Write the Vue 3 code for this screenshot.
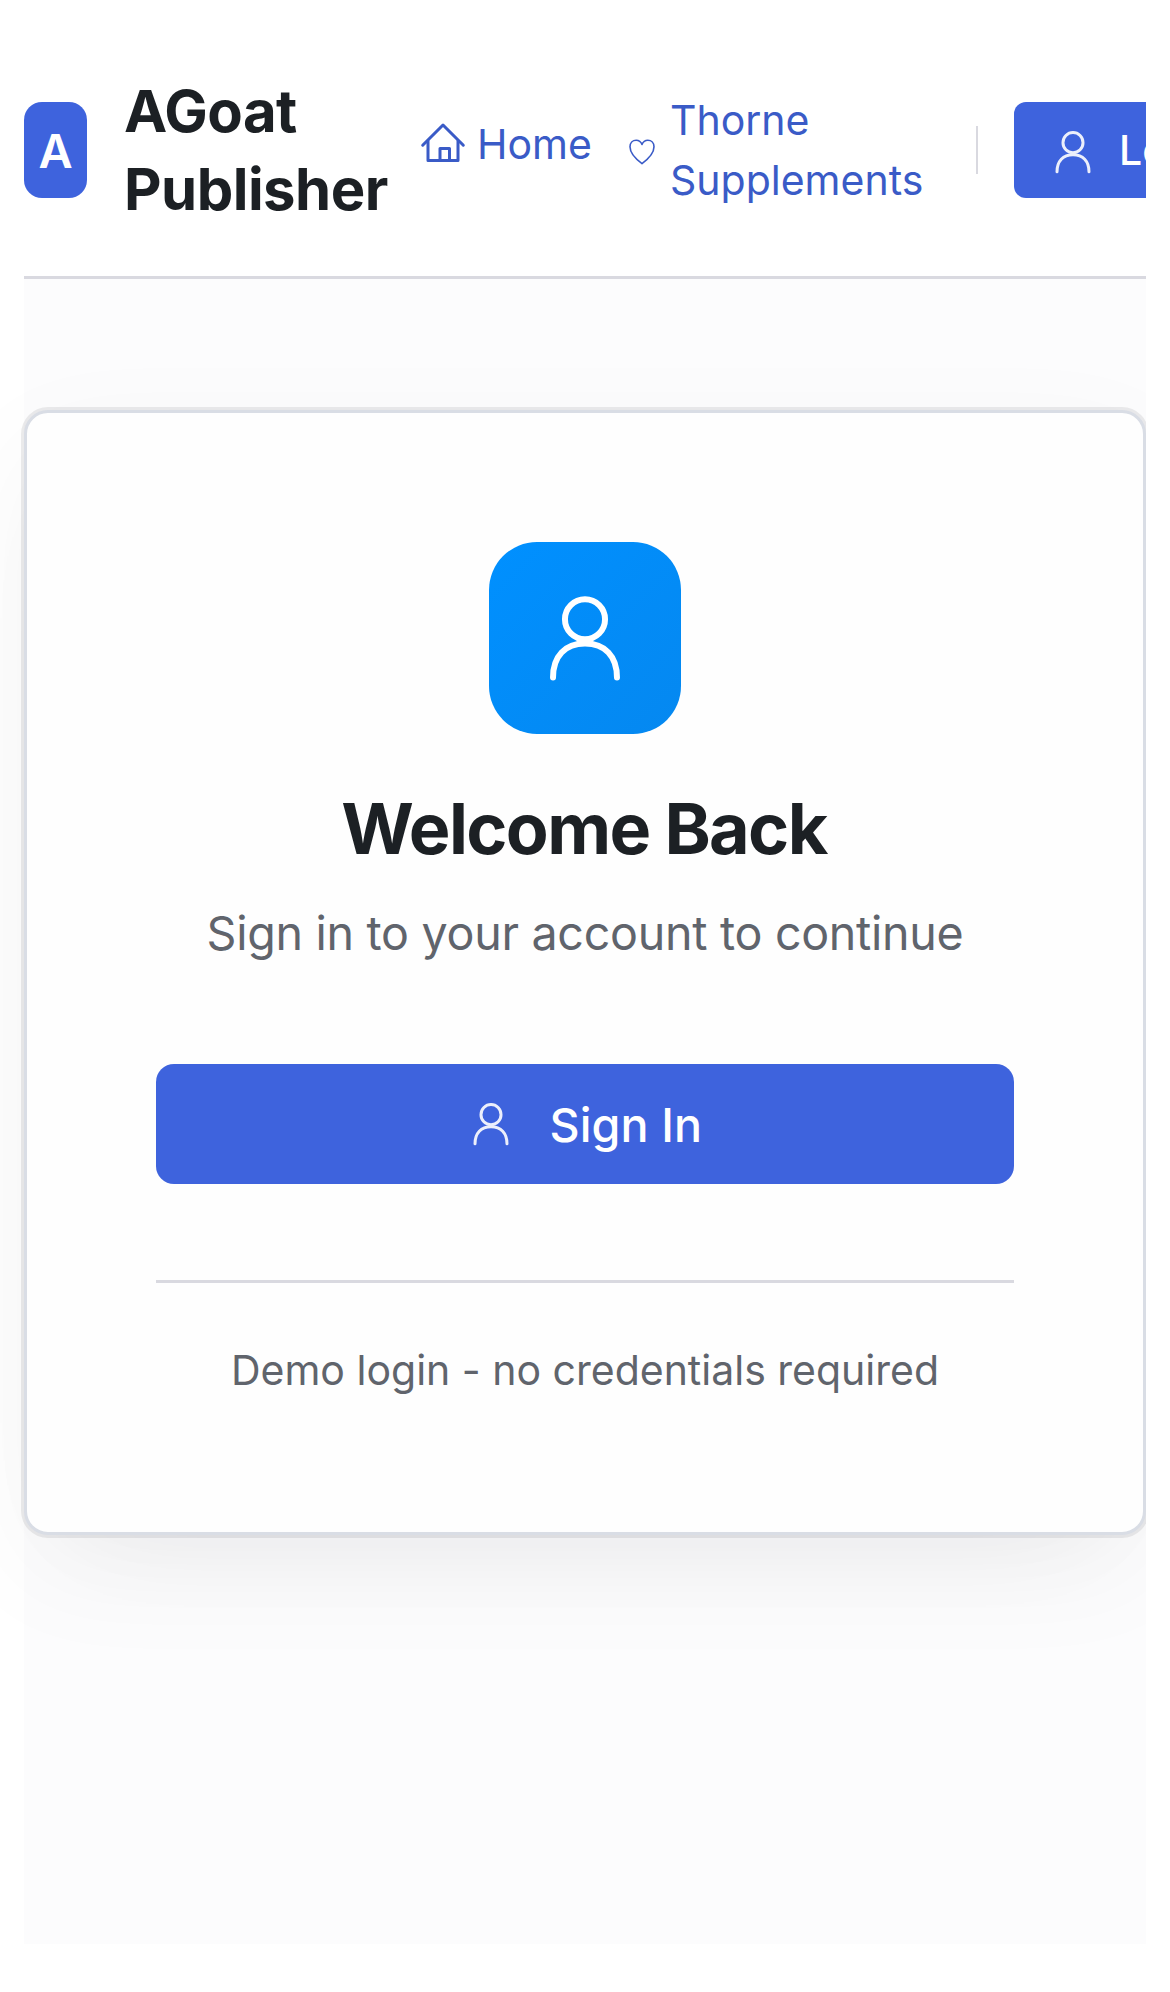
<script setup>
const brand = { initial: 'A', name: ['AGoat', 'Publisher'] }
</script>

<template>
  <div class="page">
    <header class="header">
      <div class="logo"><span>{{ brand.initial }}</span></div>
      <div class="brand">
        <div v-for="word in brand.name" :key="word">{{ word }}</div>
      </div>

      <nav class="nav">
        <a class="link home">
          <svg class="icon-home" viewBox="0 0 48 48" fill="none" stroke="currentColor" stroke-width="3" stroke-linecap="round" stroke-linejoin="round">
            <path d="M3.7 25.2 24 5 44.3 25.2" />
            <path d="M9 21V40.5H39V21" />
            <path d="M21 40V28.5H30.5V40" />
          </svg>
          <span>Home</span>
        </a>
        <a class="link supplements">
          <svg class="icon-heart" viewBox="0 0 26 26" fill="none" stroke="currentColor" stroke-width="1.6" stroke-linejoin="round">
            <path d="M13 5.4C11.8 2.4 9.8 1.2 7.2 1.2 3.6 1.2 1 3.9 1 7.8 1 13.7 6.2 19.6 13 24.6 19.8 19.6 25 13.7 25 7.8 25 3.9 22.4 1.2 18.8 1.2 16.2 1.2 14.2 2.4 13 5.4Z" />
          </svg>
          <span>Thorne<br>Supplements</span>
        </a>
      </nav>

      <div class="separator"></div>

      <button class="button login">
        <svg class="icon-user" viewBox="0 0 16 16" fill="none" stroke="currentColor" stroke-linecap="round">
          <circle cx="8" cy="4.88" r="3.34" />
          <path d="M2.67 14.6C2.67 11 4.7 8.92 8 8.92S13.33 11 13.33 14.6" />
        </svg>
        <span>Login</span>
      </button>
    </header>

    <main class="main">
      <section class="card">
        <div class="avatar">
          <svg viewBox="0 0 16 16" fill="none" stroke="currentColor" stroke-linecap="round">
            <circle cx="8" cy="4.88" r="3.34" />
            <path d="M2.67 14.6C2.67 11 4.7 8.92 8 8.92S13.33 11 13.33 14.6" />
          </svg>
        </div>
        <h1>Welcome Back</h1>
        <p class="subtitle">Sign in to your account to continue</p>
        <button class="button signin">
          <svg class="icon-user" viewBox="0 0 16 16" fill="none" stroke="currentColor" stroke-linecap="round">
            <circle cx="8" cy="4.88" r="3.34" />
            <path d="M2.67 14.6C2.67 11 4.7 8.92 8 8.92S13.33 11 13.33 14.6" />
          </svg>
          <span>Sign In</span>
        </button>
        <hr>
        <p class="note">Demo login - no credentials required</p>
      </section>
    </main>
  </div>
</template>

<style>
body {
  background: #fff;
}
</style>

<style scoped>
.page {
  box-sizing: border-box;
  width: 1170px;
  height: 1992px;
  padding: 24px 24px 48px;
  display: flex;
  flex-direction: column;
  clip-path: inset(0 24px 0 0);
  font-family: Inter, sans-serif;
  color: #1c2024;
}
.header {
  box-sizing: border-box;
  flex: none;
  height: 255px;
  display: flex;
  align-items: center;
  overflow: hidden;
  border-bottom: 3px solid #d9d9e0;
}
.header > * {
  flex: none;
}
.logo {
  width: 63px;
  height: 96px;
  border-radius: 18px;
  background: #3e63dd;
  color: #fff;
  display: flex;
  align-items: center;
  justify-content: center;
  font-weight: 600;
}
.logo span {
  padding-top: 2px;
  font-size: 47px;
  line-height: 60px;
}
.brand {
  width: 296px;
  margin-left: 37px;
  font-size: 58px;
  font-weight: 700;
  line-height: 78px;
  letter-spacing: -0.52px;
}
.nav {
  display: flex;
  align-items: center;
  color: #3a5bc7;
  font-size: 41px;
  line-height: 60px;
}
.link {
  display: flex;
  align-items: center;
  white-space: nowrap;
}
.home {
  width: 210px;
  margin-bottom: 12px;
}
.home span {
  margin-left: 10px;
}
.icon-home {
  width: 48px;
  height: 48px;
  margin-left: -1px;
}
.supplements {
  width: 300px;
}
.icon-heart {
  width: 26px;
  height: 26px;
  margin: 3px 15px 0 -1px;
}
.separator {
  width: 2px;
  height: 48px;
  margin-left: 46px;
  background: #d9d9e0;
}
.button {
  box-sizing: border-box;
  display: flex;
  align-items: center;
  padding: 0;
  border: 0;
  background: #3e63dd;
  color: #fff;
  font-family: inherit;
  font-weight: 500;
}
.icon-user {
  flex: none;
  width: 48px;
  height: 48px;
  opacity: 0.9;
}
.login {
  width: 258px;
  height: 96px;
  margin-left: 36px;
  padding-left: 34.5px;
  border-radius: 12px;
  font-size: 41px;
  line-height: 60px;
}
.login .icon-user {
  margin-top: 3px;
}
.login span {
  margin-left: 22.5px;
}
.main {
  flex: 1;
  padding-top: 131px;
  background: #fcfcfd;
}
.card {
  box-sizing: border-box;
  width: 1122px;
  height: 1125px;
  padding: 129px;
  border: 3px solid #d9dde5;
  border-radius: 24px;
  background: #fefefe;
  box-shadow:
    0 0 0 3px rgba(0, 0, 20, 0.075),
    0 36px 120px rgba(0, 0, 0, 0.042),
    0 48px 108px -60px rgba(0, 9, 50, 0.06);
  display: flex;
  flex-direction: column;
  align-items: center;
}
.avatar {
  flex: none;
  width: 192px;
  height: 192px;
  border-radius: 48px;
  background: linear-gradient(135deg, #0090ff, #0588f0);
  color: #fff;
  display: flex;
  align-items: center;
  justify-content: center;
}
.avatar svg {
  width: 96px;
  height: 96px;
}
h1 {
  margin: 49px 2px 0 0;
  font-size: 70px;
  font-weight: 700;
  line-height: 91px;
  letter-spacing: -1.63px;
}
.subtitle,
.note {
  margin: 23px 0 0;
  color: #60646c;
  font-size: 46.6px;
  line-height: 72px;
  letter-spacing: -0.29px;
}
.signin {
  flex: none;
  width: 858px;
  height: 120px;
  margin-top: 95px;
  padding-left: 310.5px;
  border-radius: 18px;
  font-size: 46.6px;
  line-height: 72px;
  letter-spacing: 0.12px;
}
.signin span {
  margin: 2px 0 0 35px;
}
hr {
  flex: none;
  width: 858px;
  height: 3px;
  margin: 96px 0 0;
  border: 0;
  background: #d9d9e0;
}
.note {
  margin-top: 57px;
  font-size: 41px;
  line-height: 60px;
  letter-spacing: 0;
}
</style>
